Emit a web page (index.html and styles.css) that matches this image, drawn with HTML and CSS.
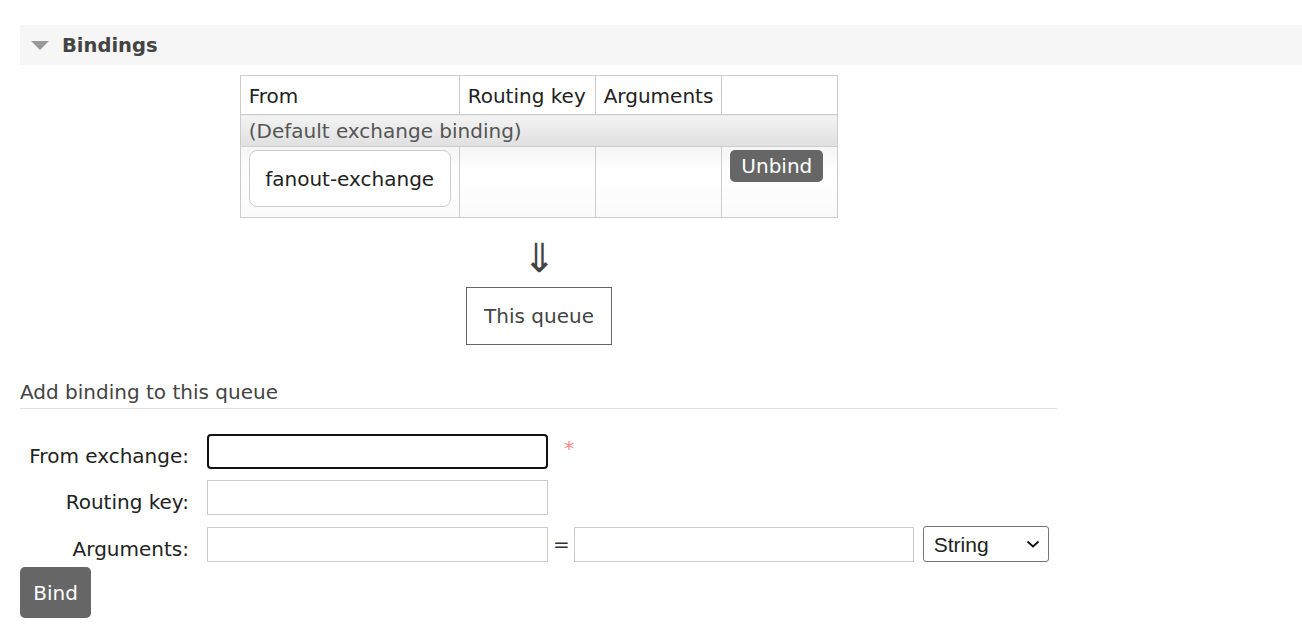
FILE: index.html
```html
<!DOCTYPE html>
<html lang="en">
<head>
    <meta charset="UTF-8">
    <title>Queue bindings</title>
    <link rel="stylesheet" href="styles.css">
</head>
<body>
    <div class="section">
        <h2 class="section-title"><span class="toggle"></span>Bindings</h2>
        <div class="hider">
            <div class="bindings-wrapper">
                <table class="list">
                    <thead>
                        <tr>
                            <th class="col-from">From</th>
                            <th class="col-key">Routing key</th>
                            <th class="col-args">Arguments</th>
                            <th class="col-action"></th>
                        </tr>
                    </thead>
                    <tbody>
                        <tr class="default-row">
                            <td colspan="4">(Default exchange binding)</td>
                        </tr>
                        <tr class="alt1">
                            <td><span class="arrow-box">fanout-exchange</span></td>
                            <td></td>
                            <td></td>
                            <td><button class="btn small">Unbind</button></td>
                        </tr>
                    </tbody>
                </table>
                <div class="down-arrow">&#8659;</div>
                <span class="queue-box">This queue</span>
            </div>

            <h3 class="sub-title">Add binding to this queue</h3>
            <form class="binding-form">
                <label for="exchange">From exchange:</label>
                <div class="field">
                    <input type="text" id="exchange" class="focused">
                    <span class="mand">*</span>
                </div>
                <label for="routing-key">Routing key:</label>
                <div class="field">
                    <input type="text" id="routing-key">
                </div>
                <label for="arg-key">Arguments:</label>
                <div class="field">
                    <input type="text" id="arg-key">
                    <span class="equals">=</span>
                    <input type="text" class="arg-value">
                    <span class="select-wrap">
                        <select class="arg-type">
                            <option>String</option>
                            <option>Number</option>
                            <option>Boolean</option>
                            <option>List</option>
                        </select>
                        <svg class="chevron" width="14" height="8" viewBox="0 0 14 8">
                            <path d="M1.5 1.5 L7 6.5 L12.5 1.5" fill="none" stroke="#111" stroke-width="1.8"/>
                        </svg>
                    </span>
                </div>
            </form>
            <button class="btn bind">Bind</button>
        </div>
    </div>
</body>
</html>
```

FILE: styles.css
```css
body {
    font-family: "DejaVu Sans", Verdana, sans-serif;
    font-size: 20px;
    color: #444;
    margin: 0;
    padding: 0;
    background: #fff;
}
.section {
    padding: 25px 0 0 20px;
}
.section-title {
    display: flex;
    align-items: center;
    height: 40px;
    margin: 0;
    padding-left: 11px;
    background: #f6f6f6;
    font-size: 19.5px;
    font-weight: bold;
    color: #444;
}
.toggle {
    width: 0;
    height: 0;
    border-left: 9px solid transparent;
    border-right: 9px solid transparent;
    border-top: 9px solid #999;
    margin-right: 13px;
    margin-top: 1px;
}
.hider {
    width: 1037px;
}
.bindings-wrapper {
    display: flex;
    flex-direction: column;
    align-items: center;
    padding: 10px 0 0 1px;
}
/* Bindings table */
table.list {
    border-collapse: collapse;
    color: #222;
}
table.list th,
table.list td {
    border: 1px solid #ccc;
    padding: 0 8px;
    text-align: left;
    font-weight: normal;
}
table.list th {
    height: 36px;
    padding-top: 2px;
    background: #fff;
}
.col-from { width: 202px; }
.col-key { width: 119px; }
.col-args { width: 109px; }
.col-action { width: 99px; }
table.list .default-row td {
    height: 30px;
    padding-top: 1px;
    color: #555;
    background: linear-gradient(#f3f3f3, #e0e0e0);
}
table.list .alt1 td {
    height: 67px;
    vertical-align: top;
    padding-top: 3px;
    background: linear-gradient(#f5f5f5, #fff 35%, #fafafa);
}
.arrow-box {
    display: flex;
    align-items: center;
    justify-content: center;
    height: 55px;
    border: 1px solid #ccc;
    border-radius: 8px;
    background: #fff;
    color: #222;
}
.btn {
    font-family: "DejaVu Sans", Verdana, sans-serif;
    background: #666;
    color: #fff;
    border: none;
    border-radius: 5px;
    cursor: pointer;
}
.btn.small {
    font-size: 20px;
    height: 32px;
    padding: 0 11px;
}
.down-arrow {
    font-size: 40px;
    line-height: 40px;
    color: #444;
    margin-top: 20px;
}
.queue-box {
    display: flex;
    align-items: center;
    height: 56px;
    padding: 0 17px;
    margin-top: 9px;
    border: 1px solid #666;
    color: #444;
}
/* Add binding form */
.sub-title {
    font-size: 20px;
    font-weight: normal;
    color: #444;
    margin: 35px 0 0;
    padding-bottom: 4px;
    border-bottom: 1px solid #ddd;
}
.binding-form {
    display: grid;
    grid-template-columns: 169px auto;
    column-gap: 18px;
    row-gap: 11px;
    align-items: center;
    margin-top: 25px;
    color: #222;
}
.binding-form label {
    text-align: right;
    padding-top: 9px;
}
.field {
    display: flex;
    align-items: center;
}
.field input {
    width: 341px;
    height: 35px;
    box-sizing: border-box;
    border: 1px solid #ccc;
    margin: 0;
    padding: 0 6px;
    font-size: 20px;
}
.field input.focused {
    border: 2px solid #111;
    border-radius: 4px;
}
.mand {
    color: #f88;
    margin-left: 16px;
    margin-top: -8px;
    font-size: 20px;
}
.equals {
    margin: 0 4px 0 5px;
    color: #333;
}
.field input.arg-value {
    width: 340px;
}
.select-wrap {
    position: relative;
    margin-left: 9px;
}
.arg-type {
    appearance: none;
    width: 126px;
    height: 36px;
    border: 1px solid #767676;
    border-radius: 3px;
    background: #fff;
    font-family: "Liberation Sans", Arial, sans-serif;
    font-size: 21px;
    color: #222;
    padding: 0 10px;
}
.chevron {
    position: absolute;
    right: 9px;
    top: 14px;
    pointer-events: none;
}
.btn.bind {
    display: block;
    width: 71px;
    height: 51px;
    margin-top: 5px;
    font-size: 20px;
}
```
